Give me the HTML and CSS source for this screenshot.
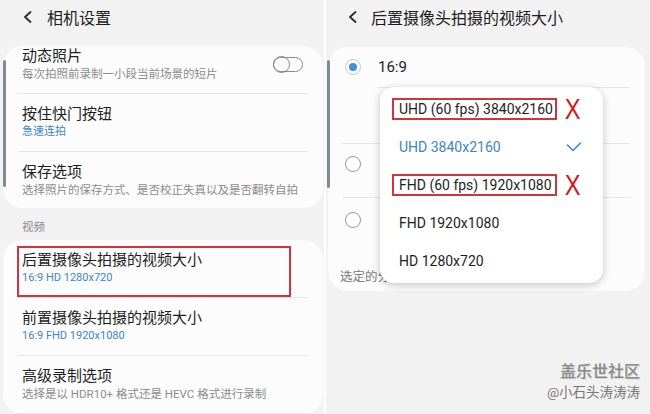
FILE: index.html
```html
<!DOCTYPE html>
<html lang="zh-CN">

<head>
    <meta charset="UTF-8">
    <meta name="viewport" content="width=device-width, initial-scale=1.0">
    <title>相机设置</title>
    <link rel="stylesheet" href="styles.css">
</head>

<body>
    <div class="shots">
        <!-- 左：相机设置列表 -->
        <section class="screen screen-left">
            <div class="topbar">
                <svg class="back" width="9" height="12" viewBox="0 0 9 12"><polyline points="7.5,1 2,6 7.5,11" /></svg>
                <span>相机设置</span>
            </div>

            <div class="card card-first">
                <span class="scrollbar"></span>
                <div class="item item-top">
                    <div class="item-body">
                        <div class="item-title">动态照片</div>
                        <div class="item-sub">每次拍照前录制一小段当前场景的短片</div>
                    </div>
                    <span class="switch"></span>
                </div>
                <div class="item">
                    <div class="item-body">
                        <div class="item-title">按住快门按钮</div>
                        <div class="item-sub blue">急速连拍</div>
                    </div>
                </div>
                <div class="item item-last">
                    <div class="item-body">
                        <div class="item-title">保存选项</div>
                        <div class="item-sub">选择照片的保存方式、是否校正失真以及是否翻转自拍</div>
                    </div>
                </div>
            </div>

            <div class="section-label">视频</div>

            <div class="card">
                <div class="item item-marked">
                    <div class="item-body">
                        <div class="item-title">后置摄像头拍摄的视频大小</div>
                        <div class="item-sub blue">16:9 HD 1280x720</div>
                    </div>
                </div>
                <div class="item">
                    <div class="item-body">
                        <div class="item-title">前置摄像头拍摄的视频大小</div>
                        <div class="item-sub blue">16:9 FHD 1920x1080</div>
                    </div>
                </div>
                <div class="item">
                    <div class="item-body">
                        <div class="item-title">高级录制选项</div>
                        <div class="item-sub">选择是以 HDR10+ 格式还是 HEVC 格式进行录制</div>
                    </div>
                </div>
            </div>
        </section>

        <!-- 右：视频大小选择 -->
        <section class="screen screen-right">
            <div class="topbar">
                <svg class="back" width="9" height="12" viewBox="0 0 9 12"><polyline points="7.5,1 2,6 7.5,11" /></svg>
                <span>后置摄像头拍摄的视频大小</span>
            </div>

            <div class="card picker">
                <span class="scrollbar"></span>
                <div class="option">
                    <div class="option-head">
                        <span class="radio radio-on"></span>
                        <span class="option-label">16:9</span>
                    </div>
                    <div class="option-value"></div>
                </div>
                <div class="option option-second">
                    <span class="radio"></span>
                </div>
                <div class="option option-third">
                    <span class="radio"></span>
                </div>
                <p class="picker-note">选定的分辨率将用于录制视频</p>

                <div class="menu">
                    <div class="menu-item">
                        <span class="flag">UHD (60 fps) 3840x2160</span>
                        <span class="cross">X</span>
                    </div>
                    <div class="menu-item menu-item-active">
                        <span>UHD 3840x2160</span>
                        <svg class="check" width="16" height="10" viewBox="0 0 16 10"><polyline points="1.5,3 7,8.5 14.5,1" /></svg>
                    </div>
                    <div class="menu-item">
                        <span class="flag">FHD (60 fps) 1920x1080</span>
                        <span class="cross">X</span>
                    </div>
                    <div class="menu-item">FHD 1920x1080</div>
                    <div class="menu-item">HD 1280x720</div>
                </div>
            </div>

            <div class="watermark">
                <div class="watermark-name">盖乐世社区</div>
                <div class="watermark-user">@小石头涛涛涛</div>
            </div>
        </section>
    </div>
</body>

</html>
```

FILE: styles.css
```css
:root {
    --screen-bg: #f2f2f2;
    --card-bg: #fcfcfc;
    --line: #e6e6e6;
    --text: #1e1e1e;
    --muted: #8c8c8c;
    --blue: #3b87c7;
    --mark: #d2343a;
}

* {
    box-sizing: border-box;
}

body {
    margin: 0;
    background-color: #fff;
    color: var(--text);
    font-family: Roboto, "Noto Sans CJK SC", sans-serif;
}

.shots {
    display: flex;
    gap: 2px;
    height: 414px;
    overflow: hidden;
}

.screen {
    display: flex;
    flex-direction: column;
    width: 324px;
    background-color: var(--screen-bg);
    overflow: hidden;
}

.screen-right {
    flex: 1;
}

.topbar {
    display: flex;
    align-items: center;
    gap: 15px;
    height: 34px;
    padding-left: 23px;
    font-size: 16px;
}

.screen-right .topbar {
    padding-left: 22px;
    gap: 14px;
}

.back polyline,
.check polyline {
    fill: none;
    stroke-width: 1.8;
    stroke-linecap: round;
    stroke-linejoin: round;
}

.back polyline {
    stroke: #2a2a2a;
}

.card {
    position: relative;
    margin: 0 1px 0 3px;
    background-color: var(--card-bg);
    border-radius: 20px;
}

.card-first {
    margin-top: 12px;
}

.scrollbar {
    position: absolute;
    left: 0;
    top: 14px;
    width: 3px;
    height: 127px;
    border-radius: 2px;
    background-color: #7e8c95;
}

/* list rows */
.item {
    position: relative;
    display: flex;
    align-items: center;
    margin: 0 15px;
    padding: 10px 0 11px 4px;
    border-bottom: 1px solid var(--line);
}

.item-top {
    padding-top: 0;
}

.item-last {
    padding-bottom: 10px;
    border-bottom: none;
}

.item-body {
    flex: 1;
}

.item-title {
    font-size: 15px;
    line-height: 20px;
}

.item-sub {
    font-size: 11.5px;
    line-height: 16px;
    color: var(--muted);
    white-space: nowrap;
}

.item-sub.blue {
    font-size: 11px;
    color: var(--blue);
}

.item-marked::after {
    content: "";
    position: absolute;
    left: -1px;
    top: 6px;
    width: 270px;
    height: 47px;
    border: 2px solid var(--mark);
}

.switch {
    position: relative;
    width: 30px;
    height: 15px;
    margin-right: 5px;
    border: 1.5px solid #8a8a8a;
    border-radius: 8px;
}

.switch::before {
    content: "";
    position: absolute;
    left: -1.5px;
    top: -1.5px;
    width: 15px;
    height: 15px;
    border: 1.5px solid #8a8a8a;
    border-radius: 50%;
}

.section-label {
    padding: 11px 22px 5px;
    font-size: 11.5px;
    line-height: 16px;
    color: var(--muted);
}

/* right screen */
.picker {
    margin: 13px 5px 0 2px;
}

.picker .scrollbar {
    left: -1px;
    top: 13px;
    height: 128px;
}

.option {
    margin: 0 15px 0 14px;
    border-bottom: 1px solid var(--line);
}

.option-head {
    display: flex;
    align-items: center;
    gap: 17px;
    height: 40px;
    padding-left: 3px;
}

.option-label {
    font-size: 15px;
}

.option-value {
    height: 56px;
    margin-left: 36px;
    border-top: 1px solid var(--line);
}

.option-second {
    height: 54px;
    padding: 12px 0 0 3px;
}

.option-third {
    height: 57px;
    padding: 14px 0 0 3px;
    border-bottom: none;
}

.radio {
    display: block;
    width: 16px;
    height: 16px;
    border: 1.5px solid #9a9a9a;
    border-radius: 50%;
}

.radio-on {
    position: relative;
    border-color: #c9c9c9;
}

.radio-on::after {
    content: "";
    position: absolute;
    left: 2.5px;
    top: 2.5px;
    width: 8px;
    height: 8px;
    border-radius: 50%;
    background-color: #3d8fe0;
}

.picker-note {
    margin: 14px 0 0;
    padding: 0 0 6px 12px;
    font-size: 12.5px;
    line-height: 16px;
    color: #7a7a7a;
    white-space: nowrap;
}

.menu {
    position: absolute;
    left: 52px;
    top: 40px;
    width: 223px;
    padding: 3px 0;
    background-color: #fff;
    border-radius: 14px;
    box-shadow: 0 2px 8px rgba(0, 0, 0, 0.22);
}

.menu-item {
    display: flex;
    align-items: center;
    height: 38px;
    padding: 0 21px 0 19px;
    font-size: 14px;
    white-space: nowrap;
}

.menu-item-active {
    justify-content: space-between;
    color: var(--blue);
}

.check polyline {
    stroke: var(--blue);
    stroke-width: 1.5;
}

.flag {
    display: inline-block;
    width: 169px;
    height: 22px;
    margin-left: -7px;
    padding-left: 5px;
    line-height: 18px;
    border: 2px solid var(--mark);
}

.cross {
    display: inline-block;
    margin-left: 6px;
    font-family: "Liberation Sans", sans-serif;
    font-size: 29px;
    line-height: 22px;
    color: #d11a1a;
    transform: scaleX(0.82);
}

.watermark {
    margin-top: auto;
    padding: 0 10px 13px 0;
    text-align: right;
}

.watermark-name {
    font-size: 16px;
    line-height: 22px;
    font-weight: 500;
    color: #8a8a8a;
    text-shadow: 1px 1px 0 #d8d8d8;
}

.watermark-user {
    font-size: 13.5px;
    line-height: 18px;
    color: #787878;
}
```
